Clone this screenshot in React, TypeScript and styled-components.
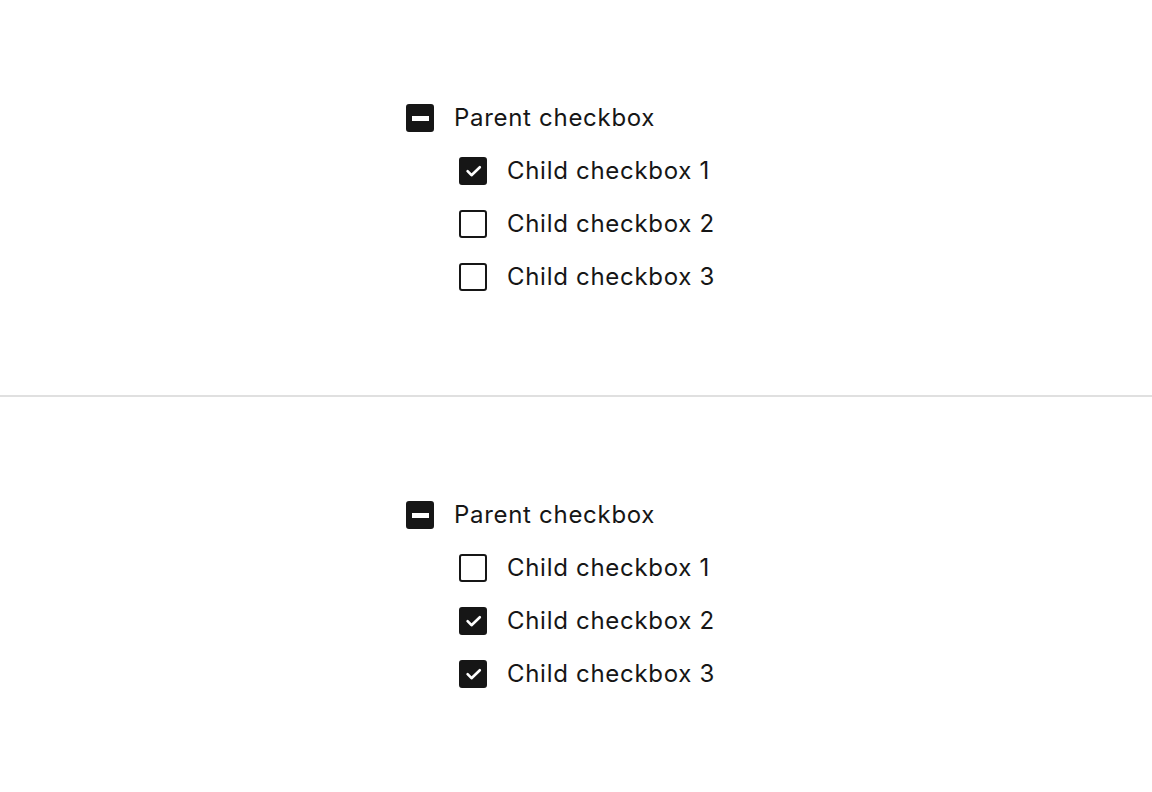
import React, { useState } from 'react';
import styled, { createGlobalStyle } from 'styled-components';

const GlobalStyle = createGlobalStyle`
  html, body {
    margin: 0;
    padding: 0;
    background: #ffffff;
  }

  body {
    font-family: "Inter", "Noto Sans", "Liberation Sans", sans-serif;
    color: #161616;
  }
`;

const Page = styled.div`
  display: flex;
  flex-direction: column;
  width: 100%;
  height: 792px;
`;

const Panel = styled.section`
  flex: 1;
  display: flex;
  align-items: center;
  justify-content: center;
  padding-right: 31px;

  & + & {
    border-top: 2px solid #e0e0e0;
  }
`;

const Group = styled.div`
  display: flex;
  flex-direction: column;
  gap: 25px;
`;

const Children = styled.div`
  display: flex;
  flex-direction: column;
  gap: 25px;
  padding-left: 53px;
`;

const Row = styled.label`
  display: flex;
  align-items: center;
  gap: 20px;
  height: 28px;
  cursor: pointer;
  font-size: 24px;
  font-weight: 400;
  line-height: 28px;
  letter-spacing: 0.7px;
  color: #161616;
  user-select: none;
`;

const Box = styled.span<{ $filled: boolean }>`
  position: relative;
  flex: none;
  width: 28px;
  height: 28px;
  box-sizing: border-box;
  border-radius: 3px;
  display: flex;
  align-items: center;
  justify-content: center;
  background: ${({ $filled }) => ($filled ? '#161616' : '#ffffff')};
  border: 2px solid #161616;
`;

const Dash = styled.span`
  width: 17px;
  height: 5px;
  background: #ffffff;
`;

// tick is drawn over the whole box, so the svg sits on top of the border
const Tick = styled.svg`
  position: absolute;
  inset: -2px;
`;

type Mark = 'checked' | 'mixed' | 'empty';

const Checkbox = ({ mark }: { mark: Mark }) => (
  <Box $filled={mark !== 'empty'}>
    {mark === 'mixed' ? <Dash /> : null}
    {mark === 'checked' ? (
      <Tick width="28" height="28" viewBox="0 0 28 28" fill="none">
        <path
          d="M8.6 14.2L12.5 18.2L20.8 10.2"
          stroke="#ffffff"
          strokeWidth="2.6"
          strokeLinecap="round"
          strokeLinejoin="round"
        />
      </Tick>
    ) : null}
  </Box>
);

interface CheckGroupProps {
  initial: boolean[];
}

const CheckGroup = ({ initial }: CheckGroupProps) => {
  const [items, setItems] = useState(initial);
  const all = items.every(Boolean);
  const none = items.every((v) => !v);
  const parentMark: Mark = all ? 'checked' : none ? 'empty' : 'mixed';

  const toggleAll = () => setItems(items.map(() => !all));
  const toggle = (i: number) => setItems(items.map((v, j) => (j === i ? !v : v)));

  return (
    <Group>
      <Row onClick={toggleAll}>
        <Checkbox mark={parentMark} />
        Parent checkbox
      </Row>
      <Children>
        {items.map((checked, i) => (
          <Row key={i} onClick={() => toggle(i)}>
            <Checkbox mark={checked ? 'checked' : 'empty'} />
            Child checkbox {i + 1}
          </Row>
        ))}
      </Children>
    </Group>
  );
};

const App = () => (
  <>
    <GlobalStyle />
    <Page>
      <Panel>
        <CheckGroup initial={[true, false, false]} />
      </Panel>
      <Panel>
        <CheckGroup initial={[false, true, true]} />
      </Panel>
    </Page>
  </>
);

export default App;
